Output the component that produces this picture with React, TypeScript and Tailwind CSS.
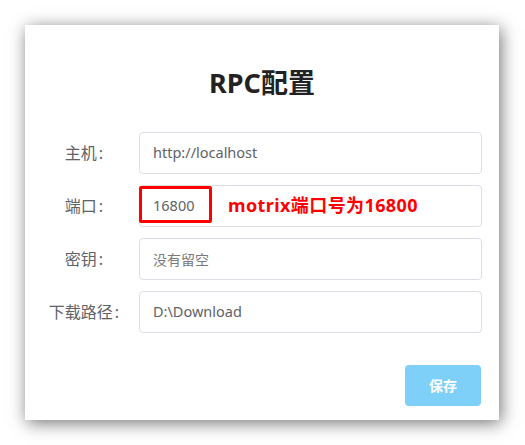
import React from "react";

const font = { fontFamily: '"Noto Sans", "Noto Sans CJK SC", sans-serif' };

function Row({ label, children }: { label: string; children: React.ReactNode }) {
  return (
    <div className="flex h-[42px] items-center">
      <div className="w-[114px] shrink-0 pl-[4px] text-center text-[16px] text-[#606266]">
        {label}
        <span className="ml-[2px]">:</span>
      </div>
      <div className="relative flex h-full w-[343px] items-center rounded-[4px] border border-[#dcdfe6] px-[13px] text-[14.5px] text-[#606266]">
        {children}
      </div>
    </div>
  );
}

export default function App() {
  return (
    <div className="min-h-screen bg-white p-[25px]" style={font}>
      <div className="flex h-[395px] w-[474px] flex-col bg-white shadow-[2px_3px_16px_rgba(0,0,0,0.55)]">
        <h1 className="pt-[40px] text-center text-[27px] font-bold leading-[36px] text-[#222]">RPC配置</h1>
        <div className="mt-[31px] flex flex-col gap-[11px]">
          <Row label="主机">http://localhost</Row>
          <Row label="端口">
            16800
            <div className="absolute left-[-1px] top-[0px] h-[37px] w-[73px] rounded-[2px] border-[3px] border-[#ff0000]" />
            <span className="absolute left-[88px] top-[6px] text-[18px] font-bold leading-[26px] tracking-[0.4px] text-[#ff0000]">
              motrix端口号为16800
            </span>
          </Row>
          <Row label="密钥">
            <span className="text-[14px] text-[#7a7a7a]">没有留空</span>
          </Row>
          <Row label="下载路径">D:\Download</Row>
        </div>
        <div className="mt-auto flex justify-end pb-[14px] pr-[18px]">
          <button className="h-[41px] w-[76px] rounded-[4px] bg-[#7fd0f8] text-[14px] font-bold text-white">保存</button>
        </div>
      </div>
    </div>
  );
}
